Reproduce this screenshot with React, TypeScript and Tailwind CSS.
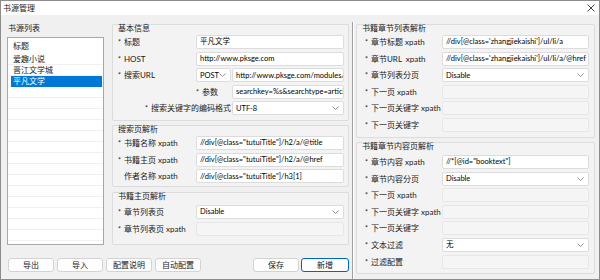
import React from "react";

type FieldKind = "text" | "select" | "disabled";

const Chevron = () => (
  <svg width="7" height="4" viewBox="0 0 7 4" className="shrink-0">
    <polyline points="0.5,0.5 3.5,3.5 6.5,0.5" fill="none" stroke="#767676" strokeWidth="0.8" />
  </svg>
);

const Field = ({ kind, value = "", className = "" }: { kind: FieldKind; value?: string; className?: string }) => {
  if (kind === "disabled") {
    return <div className={`h-[14px] rounded-[2px] border border-[#e7e7e7] bg-[#f5f5f5] ${className}`} />;
  }
  if (kind === "select") {
    return (
      <div className={`flex h-[14px] items-center justify-between rounded-[2px] border border-[#dcdcdc] bg-white pl-[3px] pr-[4px] text-[7.5px] text-black ${className}`}>
        <span className="whitespace-nowrap">{value}</span>
        <Chevron />
      </div>
    );
  }
  return (
    <div className={`flex h-[14px] items-center overflow-hidden whitespace-nowrap rounded-[2px] border border-[#dcdcdc] bg-white pl-[3px] text-[7.5px] text-black ${className}`}>
      {value}
    </div>
  );
};

const Label = ({ text, star = true }: { text: string; star?: boolean }) => (
  <span className="flex items-center whitespace-pre text-[8px] leading-[10px] text-[#1a1a1a]">
    {star && <span className="mr-[3px] text-[7px]">*</span>}
    {text}
  </span>
);

const Group = ({
  title,
  className,
  rowsTop = "mt-[3px]",
  children,
}: {
  title: string;
  className: string;
  rowsTop?: string;
  children: React.ReactNode;
}) => (
  <div className={`rounded-[2px] border border-[#dcdcdc] bg-[#f3f3f3] ${className}`}>
    <div className="-mt-[1px] h-[8px] pl-[5px] text-[8px] leading-[8px] text-[#1a1a1a]">{title}</div>
    <div className={`flex flex-col gap-[2.6px] ${rowsTop}`}>{children}</div>
  </div>
);

const MidRow = ({ label, star, kind, value }: { label: string; star?: boolean; kind: FieldKind; value?: string }) => (
  <div className="flex h-[14px] items-center">
    <div className={`w-[83px] ${star === false ? "pl-[11px]" : "pl-[5px]"}`}>
      <Label text={label} star={star} />
    </div>
    <Field kind={kind} value={value} className="mr-[4px] flex-1" />
  </div>
);

const RightRow = ({ label, kind, value }: { label: string; kind: FieldKind; value?: string }) => (
  <div className="flex h-[14px] items-center">
    <div className="w-[85px] pl-[8px]">
      <Label text={label} />
    </div>
    <Field kind={kind} value={value} className="mr-[5px] flex-1" />
  </div>
);

const Button = ({ text, primary, className = "" }: { text: string; primary?: boolean; className?: string }) => (
  <div
    className={`flex h-[14px] items-center justify-center rounded-[3px] border bg-[#fdfdfd] text-[8px] text-[#1a1a1a] ${
      primary ? "border-[#0067c0]" : "border-[#d3d3d3]"
    } ${className}`}
  >
    {text}
  </div>
);

const books = ["爱趣小说", "晋江文学城", "平凡文学"];

const App = () => {
  return (
    <div className="flex h-[280px] w-[600px] flex-col overflow-hidden border border-[#8c8c8c] bg-[#f0f0f0] font-['Lato','Noto_Sans_CJK_SC',sans-serif]">
      {/* title bar */}
      <div className="flex h-[14px] shrink-0 items-center justify-between bg-white pl-[2px] pr-[4px]">
        <span className="text-[8px] text-[#1a1a1a]">书源管理</span>
        <svg width="8" height="8" viewBox="0 0 8 8">
          <path d="M0.5 0.5 L7.5 7.5 M7.5 0.5 L0.5 7.5" stroke="#2b2b2b" strokeWidth="0.9" />
        </svg>
      </div>

      <div className="flex flex-1 pl-[6px]">
        {/* left + middle */}
        <div className="flex flex-col">
          <div className="flex">
            {/* book source list */}
            <div className="flex w-[97px] flex-col pt-[9px]">
              <div className="h-[8px] pl-[1px] text-[8px] leading-[8px] text-[#1a1a1a]">书源列表</div>
              <div className="mt-[5px] h-[208px] overflow-hidden border border-[#a8a8a8] bg-white">
                <div className="flex h-[16px] items-center pl-[5px] text-[8px] text-[#1a1a1a]">标题</div>
                {books.map((b, i) => (
                  <div key={b} className="h-[11px] border-b border-[#f0f0f0]">
                    <div
                      className={`ml-[3px] mr-[1px] flex h-[10.5px] items-center pl-[2px] text-[8px] ${
                        i === 2 ? "bg-[#0078d7] text-white" : "text-[#1a1a1a]"
                      }`}
                    >
                      {b}
                    </div>
                  </div>
                ))}
                {Array.from({ length: 16 }).map((_, i) => (
                  <div key={i} className="h-[11px] border-b border-[#f0f0f0]" />
                ))}
              </div>
            </div>

            {/* middle groups */}
            <div className="ml-[8px] flex w-[237px] flex-col pt-[9px]">
              <Group title="基本信息" className="h-[97px]">
                <MidRow label="标题" kind="text" value="平凡文学" />
                <MidRow label="HOST" kind="text" value="http://www.pksge.com" />
                <div className="flex h-[14px] items-center">
                  <div className="w-[83px] pl-[5px]">
                    <Label text="搜索URL" />
                  </div>
                  <Field kind="select" value="POST" className="w-[35px]" />
                  <Field kind="text" value="http://www.pksge.com/modules/article/search.php" className="ml-[1px] mr-[4px] flex-1" />
                </div>
                <div className="flex h-[14px] items-center">
                  <div className="w-[83px]" />
                  <div className="w-[36px]">
                    <Label text="参数" />
                  </div>
                  <Field kind="text" value="searchkey=%s&searchtype=articlename" className="mr-[4px] flex-1" />
                </div>
                <div className="flex h-[14px] items-center">
                  <div className="flex w-[119px] justify-end pr-[1px]">
                    <Label text="搜索关键字的编码格式" />
                  </div>
                  <Field kind="select" value="UTF-8" className="mr-[4px] flex-1" />
                </div>
              </Group>

              <Group title="搜索页解析" className="mt-[4px] h-[62px]">
                <MidRow label="书籍名称 xpath" kind="text" value={'//div[@class="tutuiTitle"]/h2/a/@title'} />
                <MidRow label="书籍主页 xpath" kind="text" value={'//div[@class="tutuiTitle"]/h2/a/@href'} />
                <MidRow label="作者名称 xpath" star={false} kind="text" value={'//div[@class="tutuiTitle"]/h3[1]'} />
              </Group>

              <Group title="书籍主页解析" className="mt-[5px] h-[53px]" rowsTop="mt-[5px]">
                <MidRow label="章节列表页" kind="select" value="Disable" />
                <MidRow label="章节列表页 xpath" kind="disabled" />
              </Group>
            </div>
          </div>

          {/* bottom buttons */}
          <div className="mt-[13px] flex pl-[1px]">
            <div className="flex gap-[3px]">
              <Button text="导出" className="w-[46px]" />
              <Button text="导入" className="w-[46px]" />
              <Button text="配置说明" className="w-[46px]" />
              <Button text="自动配置" className="w-[46px]" />
            </div>
            <div className="ml-[52px] flex gap-[2px]">
              <Button text="保存" className="w-[46px]" />
              <Button text="新增" primary className="w-[48px]" />
            </div>
          </div>
        </div>

        {/* splitter */}
        <div className="ml-[3px] mt-[7px] flex w-[2px]">
          <div className="w-[1px] bg-[#a0a0a0]" />
          <div className="w-[1px] bg-white" />
        </div>

        {/* right groups */}
        <div className="ml-[2px] flex w-[239px] flex-col pt-[9px]">
          <Group title="书籍章节列表解析" className="h-[114px]">
            <RightRow label="章节标题 xpath" kind="text" value="//div[@class='zhangjiekaishi']/ul/li/a" />
            <RightRow label="章节URL  xpath" kind="text" value="//div[@class='zhangjiekaishi']/ul/li/a/@href" />
            <RightRow label="章节列表分页" kind="select" value="Disable" />
            <RightRow label="下一页 xpath" kind="disabled" />
            <RightRow label="下一页关键字 xpath" kind="disabled" />
            <RightRow label="下一页关键字" kind="disabled" />
          </Group>

          <Group title="书籍章节内容页解析" className="mt-[4px] h-[132px]" rowsTop="mt-[5px]">
            <RightRow label="章节内容 xpath" kind="text" value={'//*[@id="booktext"]'} />
            <RightRow label="章节内容分页" kind="select" value="Disable" />
            <RightRow label="下一页 xpath" kind="disabled" />
            <RightRow label="下一页关键字 xpath" kind="disabled" />
            <RightRow label="下一页关键字" kind="disabled" />
            <RightRow label="文本过滤" kind="select" value="无" />
            <RightRow label="过滤配置" kind="disabled" />
          </Group>
        </div>
      </div>
    </div>
  );
};

export default App;
